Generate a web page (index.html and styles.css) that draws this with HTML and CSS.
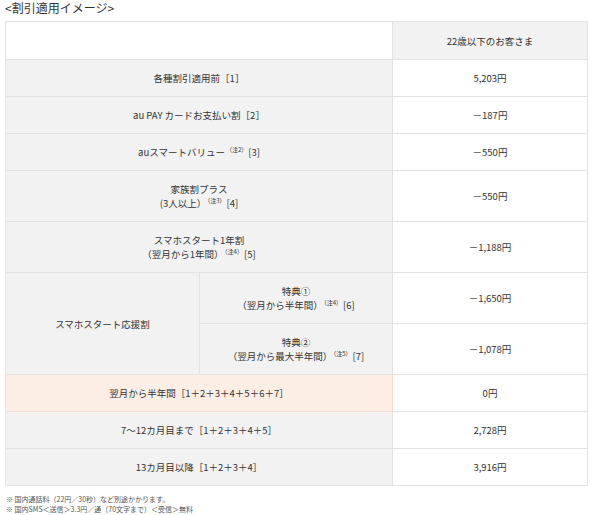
FILE: index.html
```html
<!DOCTYPE html>
<html lang="ja">
<head>
<meta charset="utf-8">
<link rel="stylesheet" href="styles.css">
</head>
<body>
<p class="title">&lt;割引適用イメージ&gt;</p>
<table class="price">
  <colgroup><col class="c1"><col class="c2"><col class="c3"></colgroup>
  <tr>
    <td class="blank" colspan="2"></td>
    <th class="head">22歳以下のお客さま</th>
  </tr>
  <tr>
    <th colspan="2">各種割引適用前［1］</th>
    <td>5,203円</td>
  </tr>
  <tr>
    <th colspan="2">au PAY カードお支払い割［2］</th>
    <td>－187円</td>
  </tr>
  <tr>
    <th colspan="2">auスマートバリュー<sup>（注2）</sup>[3]</th>
    <td>－550円</td>
  </tr>
  <tr>
    <th colspan="2">家族割プラス<br>(3人以上）<sup>（注3）</sup>[4]</th>
    <td>－550円</td>
  </tr>
  <tr>
    <th colspan="2">スマホスタート1年割<br>（翌月から1年間）<sup>（注4）</sup>[5]</th>
    <td>－1,188円</td>
  </tr>
  <tr>
    <th rowspan="2">スマホスタート応援割</th>
    <th>特典①<br>（翌月から半年間）<sup>（注4）</sup>[6]</th>
    <td>－1,650円</td>
  </tr>
  <tr>
    <th>特典②<br>（翌月から最大半年間）<sup>（注5）</sup>[7]</th>
    <td>－1,078円</td>
  </tr>
  <tr class="hl">
    <th colspan="2">翌月から半年間［1＋2＋3＋4＋5＋6＋7］</th>
    <td>0円</td>
  </tr>
  <tr>
    <th colspan="2">7～12カ月目まで［1＋2＋3＋4＋5］</th>
    <td>2,728円</td>
  </tr>
  <tr>
    <th colspan="2">13カ月目以降［1＋2＋3＋4］</th>
    <td>3,916円</td>
  </tr>
</table>
<div class="notes">
  <p>※ 国内通話料（22円／30秒）など別途かかります。</p>
  <p>※ 国内SMS＜送信＞3.3円／通（70文字まで）＜受信＞無料</p>
</div>
</body>
</html>
```
FILE: styles.css
```css
html, body {
  margin: 0;
  padding: 0;
  background: #fff;
}
body {
  padding: 0 3px 0 5px;
  font-family: "Noto Sans CJK JP", "Noto Sans", sans-serif;
  color: #333;
}
.title {
  margin: 0;
  font-size: 12px;
  line-height: 15px;
  height: 21px;
  color: #333;
}
.price {
  width: 582px;
  border-collapse: collapse;
  table-layout: fixed;
  font-size: 9.5px;
}
.c1 { width: 194px; }
.c2 { width: 193px; }
.c3 { width: 195px; }
.price th, .price td {
  border: 1px solid #e3e3e3;
  padding: 11px 4px 11px;
  line-height: 14px;
  text-align: center;
  font-weight: normal;
  vertical-align: middle;
}
.price th {
  background: #f2f2f2;
}
.price td {
  background: #fff;
}
.price th.head {
  background: #f2f2f2;
}
.price td.blank {
  background: #fff;
}
.price tr:first-child th, .price tr:first-child td {
  padding-top: 12px;
  padding-bottom: 11px;
}
.price .hl th {
  background: #fdeee5;
  border-color: #f3ddd0;
}
sup {
  font-size: 6px;
  line-height: 0;
  vertical-align: 4px;
  margin: 0 1px;
}
.notes {
  margin-top: 8px;
  font-size: 7px;
  line-height: 10px;
  color: #555;
}
.notes p {
  margin: 0;
  padding-left: 1px;
}
```
